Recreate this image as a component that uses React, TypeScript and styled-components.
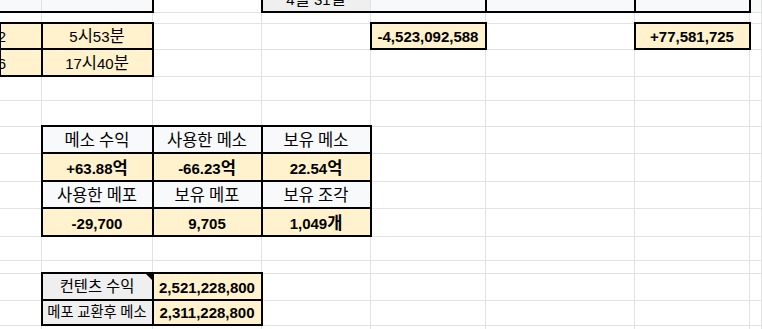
import React from 'react';
import styled, { createGlobalStyle } from 'styled-components';

const GlobalStyle = createGlobalStyle`
  html, body {
    margin: 0;
    padding: 0;
    background: #ffffff;
    overflow: hidden;
  }

  body {
    font-family: 'Liberation Sans', 'Noto Sans CJK KR', sans-serif;
    color: #000000;
  }
`;

type Tone = 'plain' | 'head' | 'top' | 'label' | 'cream';
type Align = 'center' | 'end';

const fills: Record<Tone, string> = {
  plain: '#ffffff',
  head: '#f8f9fa',
  top: '#f8f9fa',
  label: '#efefef',
  cream: '#fff2cc',
};

const Sheet = styled.div<{ $rows: string }>`
  display: grid;
  grid-template-columns: 42px 111px 109px 109px 115px 149px 115px 1fr;
  grid-template-rows: ${({ $rows }) => $rows};
  width: 762px;
`;

// one spreadsheet cell; $edges lists the sides that get a black border (t r b l)
const Cell = styled.div<{ $tone: Tone; $edges: string; $bold: boolean; $size: number; $align: Align }>`
  position: relative;
  box-sizing: border-box;
  min-width: 0;
  display: flex;
  align-items: flex-end;
  justify-content: ${({ $align }) => ($align === 'end' ? 'flex-end' : 'center')};
  padding: ${({ $align }) => ($align === 'end' ? '0 35px 4px 0' : '0 2px 4px 2px')};
  background: ${({ $tone }) => fills[$tone]};
  border-right: 1px solid #e2e2e2;
  border-bottom: 1px solid #e2e2e2;
  font-size: ${({ $size }) => $size}px;
  font-weight: ${({ $bold }) => ($bold ? 700 : 400)};
  line-height: 17px;
  white-space: nowrap;

  &::after {
    content: '';
    display: ${({ $edges }) => ($edges ? 'block' : 'none')};
    position: absolute;
    top: -2px;
    left: -1px;
    right: -2px;
    bottom: -1px;
    border-style: solid;
    border-color: #000000;
    border-width: ${({ $edges }) =>
      ['t', 'r', 'b', 'l'].map((side) => ($edges.includes(side) ? '2px' : '0')).join(' ')};
    pointer-events: none;
    z-index: 1;
  }
`;

const Text = styled.span`
  display: block;
`;

const Han = styled.span`
  font-family: 'Noto Sans CJK KR', sans-serif;
  font-size: 1.1em;
`;

// comment marker in the corner of a cell
const Note = styled.span`
  position: absolute;
  top: 0;
  right: 0;
  width: 0;
  height: 0;
  border-top: 6px solid #000000;
  border-left: 6px solid transparent;
  z-index: 2;
`;

type Spec = {
  t?: string;
  tone?: Tone;
  e?: string;
  b?: boolean;
  s?: number;
  a?: Align;
  note?: boolean;
};

const box = 'trbl';

const rows: { h: number; cells: Spec[] }[] = [
  {
    h: 13,
    cells: [
      { tone: 'top', e: 'b' },
      { tone: 'top', e: 'rb' },
      {},
      { tone: 'label', e: 'lb', t: '4월 31일' },
      { tone: 'top', e: 'rb' },
      { tone: 'top', e: 'rb' },
      { tone: 'top', e: 'rb' },
      { tone: 'top' },
    ],
  },
  { h: 11, cells: [] },
  {
    h: 26,
    cells: [
      { tone: 'cream', e: box, t: '52', a: 'end' },
      { tone: 'cream', e: box, t: '5시53분' },
      {},
      {},
      { tone: 'cream', e: box, b: true, t: '-4,523,092,588' },
      {},
      { tone: 'cream', e: box, b: true, t: '+77,581,725' },
    ],
  },
  {
    h: 27,
    cells: [
      { tone: 'cream', e: box, t: '46', a: 'end' },
      { tone: 'cream', e: box, t: '17시40분' },
    ],
  },
  { h: 24, cells: [] },
  { h: 26, cells: [] },
  {
    h: 27,
    cells: [
      {},
      { tone: 'head', e: box, t: '메소 수익' },
      { tone: 'head', e: box, t: '사용한 메소' },
      { tone: 'head', e: box, t: '보유 메소' },
    ],
  },
  {
    h: 28,
    cells: [
      {},
      { tone: 'cream', e: box, b: true, t: '+63.88억' },
      { tone: 'cream', e: box, b: true, t: '-66.23억' },
      { tone: 'cream', e: box, b: true, t: '22.54억' },
    ],
  },
  {
    h: 27,
    cells: [
      {},
      { tone: 'head', e: box, t: '사용한 메포' },
      { tone: 'head', e: box, t: '보유 메포' },
      { tone: 'head', e: box, t: '보유 조각' },
    ],
  },
  {
    h: 28,
    cells: [
      {},
      { tone: 'cream', e: box, b: true, t: '-29,700' },
      { tone: 'cream', e: box, b: true, t: '9,705' },
      { tone: 'cream', e: box, b: true, t: '1,049개' },
    ],
  },
  { h: 24, cells: [] },
  { h: 13, cells: [] },
  {
    h: 27,
    cells: [
      {},
      { tone: 'label', e: box, t: '컨텐츠 수익', s: 14, note: true },
      { tone: 'cream', e: box, b: true, t: '2,521,228,800' },
    ],
  },
  {
    h: 25,
    cells: [
      {},
      { tone: 'label', e: box, t: '메포 교환후 메소', s: 13 },
      { tone: 'cream', e: box, b: true, t: '2,311,228,800' },
    ],
  },
  { h: 26, cells: [] },
];

const pad = (cells: Spec[]): Spec[] => [...cells, ...Array(8 - cells.length).fill({})];

// hangul runs get the slightly larger korean face, like the sheet renders it
const spell = (text: string) =>
  text
    .split(/([\uAC00-\uD7A3]+)/)
    .filter(Boolean)
    .map((part, i) => (/[\uAC00-\uD7A3]/.test(part) ? <Han key={i}>{part}</Han> : part));

const App: React.FC = () => {
  return (
    <>
      <GlobalStyle />
      <Sheet $rows={rows.map((r) => `${r.h}px`).join(' ')}>
        {rows.flatMap((row, i) =>
          pad(row.cells).map((c, j) => (
            <Cell
              key={`${i}-${j}`}
              $tone={c.tone ?? 'plain'}
              $edges={c.e ?? ''}
              $bold={!!c.b}
              $size={c.s ?? 15}
              $align={c.a ?? 'center'}
            >
              {c.t && <Text>{spell(c.t)}</Text>}
              {c.note && <Note />}
            </Cell>
          ))
        )}
      </Sheet>
    </>
  );
};

export default App;
